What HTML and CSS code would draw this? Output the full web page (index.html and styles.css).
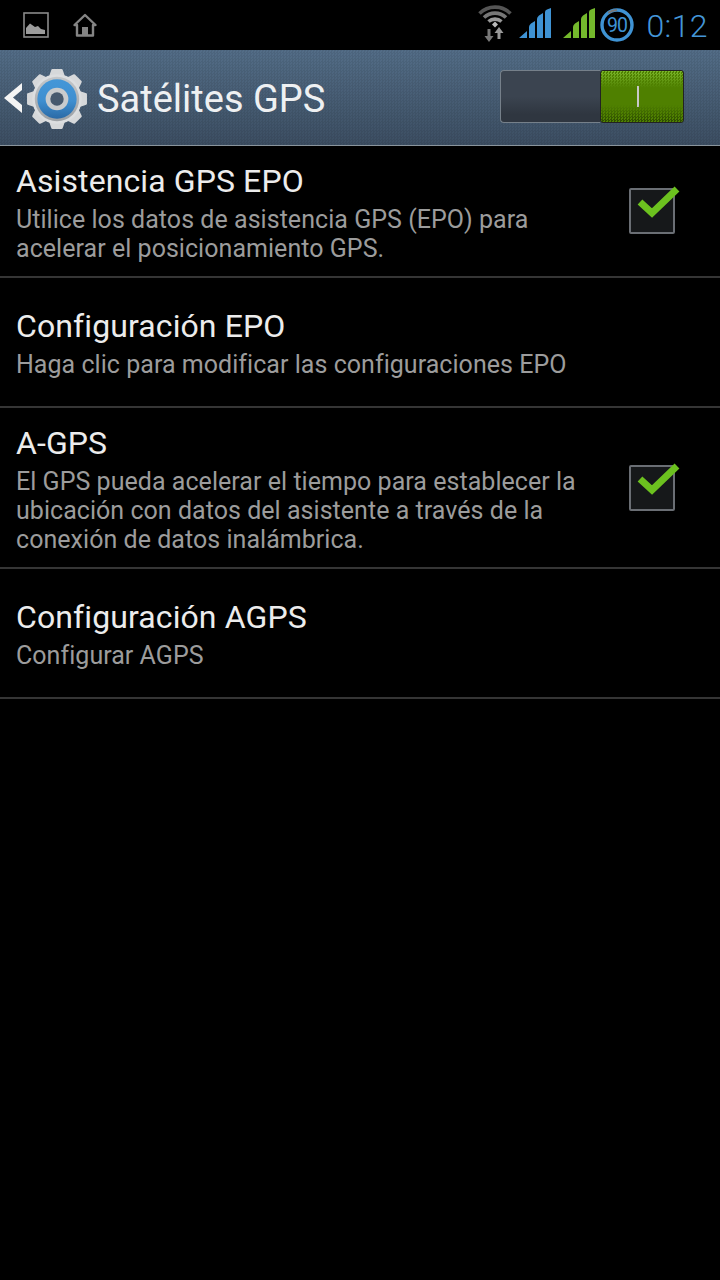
FILE: index.html
```html
<!DOCTYPE html>
<html lang="es">
<head>
    <meta charset="UTF-8">
    <meta name="viewport" content="width=device-width, initial-scale=1.0">
    <title>Satélites GPS</title>
    <link rel="stylesheet" href="styles.css">
</head>
<body>
    <header class="status">
        <div class="status-left">
            <svg width="26" height="26" viewBox="0 0 26 26">
                <rect x="1" y="1" width="24" height="24" fill="none" stroke="#8a8a8a" stroke-width="1.6"/>
                <path d="M3 22 V16 L7 11.5 L12 15 L15 14 L18 17 L22 18 V22 Z" fill="#9c9c9c"/>
            </svg>
            <svg width="24" height="24" viewBox="0 0 24 24">
                <path d="M1.5 12 L12 2 L22.5 12 L20 12 V22.5 H4 V12 Z" fill="none" stroke="#858585" stroke-width="2.4" stroke-linejoin="round"/>
                <rect x="9" y="14" width="6" height="8" fill="#858585"/>
            </svg>
        </div>
        <div class="status-right">
            <svg class="wifi" width="34" height="38" viewBox="0 0 34 38">
                <path d="M1.5 8.5 A22 22 0 0 1 32.5 8.5" fill="none" stroke="#555" stroke-width="3.6"/>
                <path d="M6 12.5 A16 16 0 0 1 28 12.5" fill="none" stroke="#777" stroke-width="3.6"/>
                <path d="M10.5 16.5 A10 10 0 0 1 23.5 16.5" fill="none" stroke="#999" stroke-width="3.6"/>
                <path d="M14 19.5 L17 16.5 L20 19.5 L17 22.5 Z" fill="#bbb"/>
                <path d="M11 37 L6.5 31 H9.5 V24 H12.5 V31 H15.5 Z" fill="#777"/>
                <path d="M21 22 L25.5 28 H22.5 V34 H19.5 V28 H16.5 Z" fill="#999"/>
            </svg>
            <svg class="signal blue" width="32" height="30" viewBox="0 0 32 30">
                <path d="M0 30 L8 23 V30 Z M10 30 V19 Q10 17 12 15.5 L16 13 V30 Z M18 30 V11 Q18 9 20 7.5 L24 5 V30 Z M26 30 V4 Q26 2 28 1.5 L32 0 V30 Z"/>
            </svg>
            <svg class="signal green" width="32" height="30" viewBox="0 0 32 30">
                <path d="M0 30 L8 23 V30 Z M10 30 V19 Q10 17 12 15.5 L16 13 V30 Z M18 30 V11 Q18 9 20 7.5 L24 5 V30 Z M26 30 V4 Q26 2 28 1.5 L32 0 V30 Z"/>
            </svg>
            <svg class="battery" width="34" height="34" viewBox="0 0 34 34">
                <circle cx="17" cy="17" r="15" fill="none" stroke="#3f93d4" stroke-width="3.4"/>
                <path d="M8.2 4.9 A15 15 0 0 1 17 2" fill="none" stroke="#777" stroke-width="2"/>
                <text x="17" y="24" class="battery-num" text-anchor="middle">90</text>
            </svg>
            <span class="clock">0:12</span>
        </div>
    </header>

    <div class="titlebar">
        <svg class="back" width="18" height="30" viewBox="0 0 18 30">
            <path d="M18 0 V7 L9 14.5 L18 22 V30 L0 15 Z" fill="#f4f4f4"/>
        </svg>
        <svg class="gear" width="62" height="62" viewBox="0 0 60 60">
            <defs>
                <path id="tooth" d="M25.5 2 H34.5 L38 12 H22 Z" fill="#d6d8da" stroke="#d6d8da" stroke-width="2" stroke-linejoin="round"/>
                <linearGradient id="ring" x1="0" y1="0" x2="0" y2="1">
                    <stop offset="0" stop-color="#c4c7ca"/>
                    <stop offset="1" stop-color="#9da1a5"/>
                </linearGradient>
                <linearGradient id="blue" x1="0" y1="0" x2="0" y2="1">
                    <stop offset="0" stop-color="#4497d8"/>
                    <stop offset="0.55" stop-color="#3f8fd0"/>
                    <stop offset="1" stop-color="#2b6aa6"/>
                </linearGradient>
            </defs>
            <use href="#tooth"/>
            <use href="#tooth" transform="rotate(45 30 30)"/>
            <use href="#tooth" transform="rotate(90 30 30)"/>
            <use href="#tooth" transform="rotate(135 30 30)"/>
            <use href="#tooth" transform="rotate(180 30 30)"/>
            <use href="#tooth" transform="rotate(225 30 30)"/>
            <use href="#tooth" transform="rotate(270 30 30)"/>
            <use href="#tooth" transform="rotate(315 30 30)"/>
            <circle cx="30" cy="30" r="24" fill="#dcdee0"/>
            <circle cx="30" cy="30" r="21.5" fill="url(#ring)"/>
            <circle cx="30" cy="30" r="19" fill="url(#blue)"/>
            <circle cx="30" cy="30" r="11" fill="#c9cbcd"/>
            <circle cx="30" cy="30" r="6.5" fill="#47596d"/>
        </svg>
        <h1 class="title">Satélites GPS</h1>
        <div class="switch">
            <div class="switch-off"></div>
            <div class="switch-on"><span class="switch-mark"></span></div>
        </div>
    </div>

    <main>
        <div class="row row-first">
            <div class="row-text">
                <div class="row-title">Asistencia GPS EPO</div>
                <div class="row-sub">Utilice los datos de asistencia GPS (EPO) para<br>acelerar el posicionamiento GPS.</div>
            </div>
            <div class="check">
                <svg width="50" height="50" viewBox="0 0 50 50">
                    <path d="M9 22 L21 33 L46 9" fill="none" stroke="#6cc11f" stroke-width="7"/>
                </svg>
            </div>
        </div>
        <div class="row row-plain">
            <div class="row-text">
                <div class="row-title">Configuración EPO</div>
                <div class="row-sub">Haga clic para modificar las configuraciones EPO</div>
            </div>
        </div>
        <div class="row row-tall">
            <div class="row-text">
                <div class="row-title">A-GPS</div>
                <div class="row-sub">El GPS pueda acelerar el tiempo para establecer la<br>ubicación con datos del asistente a través de la<br>conexión de datos inalámbrica.</div>
            </div>
            <div class="check">
                <svg width="50" height="50" viewBox="0 0 50 50">
                    <path d="M9 22 L21 33 L46 9" fill="none" stroke="#6cc11f" stroke-width="7"/>
                </svg>
            </div>
        </div>
        <div class="row row-plain">
            <div class="row-text">
                <div class="row-title">Configuración AGPS</div>
                <div class="row-sub">Configurar AGPS</div>
            </div>
        </div>
    </main>
</body>
</html>
```

FILE: styles.css
```css
html, body {
    margin: 0;
    height: 100%;
}
body {
    background-color: #000;
    font-family: Roboto, "Liberation Sans", sans-serif;
    overflow: hidden;
}
.status {
    height: 50px;
    display: flex;
    justify-content: space-between;
    align-items: center;
    background-color: #000;
}
.status-left {
    display: flex;
    align-items: center;
    gap: 24px;
    padding-left: 23px;
}
.status-right {
    display: flex;
    align-items: center;
    padding-right: 12px;
}
.wifi {
    margin-right: 7px;
    margin-bottom: 3px;
}
.signal {
    margin-bottom: 4px;
}
.blue {
    fill: #3f93d4;
    margin-right: 12px;
}
.green {
    fill: #74b82c;
    margin-right: 5px;
}
.battery {
    margin-right: 12px;
    margin-bottom: 1px;
}
.battery-num {
    fill: #3f93d4;
    font-size: 19.5px;
    letter-spacing: -1px;
}
.clock {
    color: #4496d8;
    font-size: 32px;
    font-weight: 300;
    letter-spacing: 0.4px;
    margin-top: 2px;
}
.titlebar {
    height: 96px;
    box-sizing: border-box;
    border-bottom: 1px solid #8a949c;
    background-color: #465a70;
    background-image:
        repeating-conic-gradient(rgba(0, 0, 0, 0.07) 0 25%, transparent 0 50%),
        linear-gradient(#536d87, #3c4e62);
    background-size: 3px 3px, auto;
    display: flex;
    align-items: center;
    padding-left: 4px;
}
.back {
    margin-right: 4px;
}
.gear {
    margin-right: 9px;
    margin-top: 3px;
}
.title {
    margin: 0;
    flex: 1;
    color: #eef0f2;
    font-size: 38px;
    font-weight: 400;
    margin-top: 2px;
}
.switch {
    display: flex;
    width: 184px;
    height: 53px;
    margin-right: 36px;
    margin-top: -3px;
}
.switch-off {
    width: 100px;
    box-sizing: border-box;
    background-color: #3b4450;
    background-image: linear-gradient(transparent 50%, #2f3640 85%);
    border: 1px solid #76808a;
    border-right: none;
    border-radius: 4px 0 0 4px;
}
.switch-on {
    width: 84px;
    position: relative;
    background-color: #4f8000;
    border: 1px solid #222;
    box-sizing: border-box;
    border-radius: 3px;
    display: flex;
    justify-content: center;
    align-items: center;
    padding-right: 8px;
}
.switch-on::before, .switch-on::after {
    content: "";
    position: absolute;
    left: 0;
    right: 0;
    height: 17px;
    background-size: 3px 3px;
}
.switch-on::before {
    top: 0;
    background-image: repeating-conic-gradient(#7ab52a 0 25%, transparent 0 50%);
    -webkit-mask-image: linear-gradient(#000, transparent);
    mask-image: linear-gradient(#000, transparent);
}
.switch-on::after {
    bottom: 0;
    background-image: repeating-conic-gradient(#2c4a00 0 25%, transparent 0 50%);
    -webkit-mask-image: linear-gradient(transparent, #000);
    mask-image: linear-gradient(transparent, #000);
}
.switch-mark {
    width: 2px;
    height: 21px;
    background-color: #c8c8c8;
}
.row {
    display: flex;
    align-items: center;
    box-sizing: border-box;
    border-bottom: 2px solid #353535;
    padding-left: 16px;
    padding-right: 45px;
}
.row-first {
    height: 132px;
}
.row-plain {
    height: 130px;
    padding-top: 29px;
}
.row-tall {
    height: 161px;
}
.row-first .row-text, .row-tall .row-text {
    padding-top: 16px;
}
.row-text {
    flex: 1;
    align-self: flex-start;
}
.row-title {
    color: #ececec;
    font-size: 32px;
    line-height: 38px;
    letter-spacing: 0.1px;
}
.row-sub {
    color: #9c9c9c;
    font-size: 25px;
    line-height: 29px;
    margin-top: 5px;
    letter-spacing: 0.04px;
}
.check {
    position: relative;
    width: 46px;
    height: 46px;
    box-sizing: border-box;
    border: 2px solid #6a6e74;
    border-radius: 2px;
    background-color: #16181a;
}
.check svg {
    position: absolute;
    left: 0;
    top: -10px;
}
```
